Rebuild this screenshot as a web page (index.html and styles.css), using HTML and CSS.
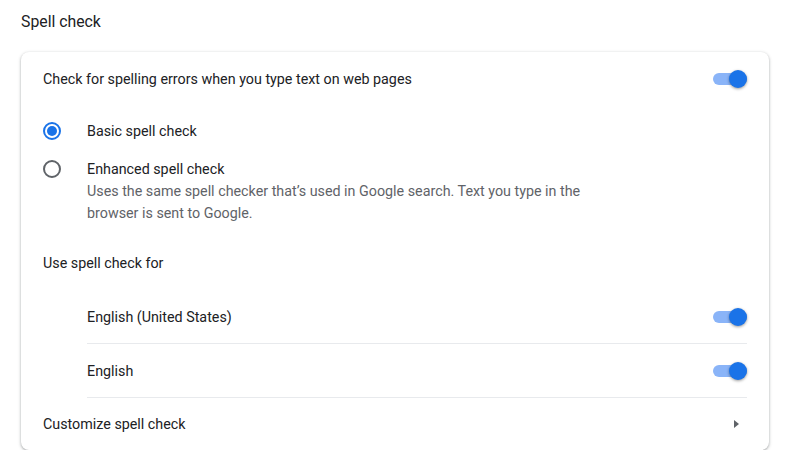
FILE: index.html
```html
<!DOCTYPE html>
<html>
  <head>
    <title>Spell check</title>
    <link rel="stylesheet" href="styles.css">
  </head>
  <body>
    <h2 class="section-title">Spell check</h2>
    <div class="card">
      <div class="row row-first">
        <span class="label">Check for spelling errors when you type text on web pages</span>
        <span class="toggle"><span class="knob"></span></span>
      </div>

      <div class="radio-row radio-basic">
        <span class="radio checked"></span>
        <span class="label">Basic spell check</span>
      </div>
      <div class="radio-row radio-enhanced">
        <span class="radio"></span>
        <div class="radio-text">
          <div class="label">Enhanced spell check</div>
          <div class="secondary">Uses the same spell checker that’s used in Google search. Text you type in the browser is sent to Google.</div>
        </div>
      </div>

      <div class="row sub-heading">
        <span class="label">Use spell check for</span>
      </div>

      <div class="lang-list">
        <div class="row lang-row">
          <span class="label">English (United States)</span>
          <span class="toggle"><span class="knob"></span></span>
        </div>
        <div class="row lang-row">
          <span class="label">English</span>
          <span class="toggle"><span class="knob"></span></span>
        </div>
      </div>

      <div class="row row-last">
        <span class="label">Customize spell check</span>
        <svg class="arrow" width="10" height="10" viewBox="0 0 10 10">
          <path d="M3 1 L8 5 L3 9 Z" fill="#5f6368"/>
        </svg>
      </div>
    </div>
  </body>
</html>
```

FILE: styles.css
```css
body {
  margin: 0;
  padding: 0 27px 0 21px;
  font-family: Roboto, "Liberation Sans", sans-serif;
  font-size: 14.3px;
  color: #202124;
  background-color: #fff;
}
.section-title {
  margin: 0;
  height: 52px;
  padding-top: 12px;
  box-sizing: border-box;
  font-size: 15.8px;
  font-weight: normal;
  line-height: 20px;
  color: #202124;
}
.card {
  width: 748px;
  border-radius: 8px;
  background-color: #fff;
  box-shadow: 0 1px 2px 0 rgba(60, 64, 67, 0.3), 0 1px 3px 1px rgba(60, 64, 67, 0.15);
  padding: 0 22px;
  box-sizing: border-box;
}
.row {
  display: flex;
  align-items: center;
  justify-content: space-between;
}
.row-first {
  height: 52px;
  padding-top: 1px;
  box-sizing: border-box;
}
.radio-row {
  display: flex;
  align-items: flex-start;
}
.radio-basic {
  height: 54px;
  align-items: center;
}
.radio-enhanced {
  padding-bottom: 12px;
}
.radio {
  width: 18px;
  height: 18px;
  box-sizing: border-box;
  border: 2px solid #5f6368;
  border-radius: 50%;
  margin-right: 26px;
  position: relative;
  flex-shrink: 0;
}
.radio-enhanced .radio {
  margin-top: 2px;
}
.radio.checked {
  border-color: #1a73e8;
}
.radio.checked::after {
  content: "";
  position: absolute;
  left: 2px;
  top: 2px;
  width: 10px;
  height: 10px;
  border-radius: 50%;
  background-color: #1a73e8;
}
.radio-text .label {
  line-height: 22px;
}
.secondary {
  color: #5f6368;
  line-height: 22px;
  width: 510px;
}
.sub-heading {
  height: 54px;
}
.lang-list {
  padding-left: 44px;
}
.lang-row {
  height: 53px;
  border-bottom: 1px solid #e8eaed;
}
.row-last {
  height: 52px;
}
.toggle {
  position: relative;
  width: 34px;
  height: 12px;
  border-radius: 6px;
  background-color: #8ab4f8;
  flex-shrink: 0;
}
.knob {
  position: absolute;
  right: 0;
  top: -3px;
  width: 18px;
  height: 18px;
  border-radius: 50%;
  background-color: #1a73e8;
  box-shadow: 0 1px 3px rgba(0, 0, 0, 0.4);
}
.arrow {
  margin-right: 6px;
}
```
